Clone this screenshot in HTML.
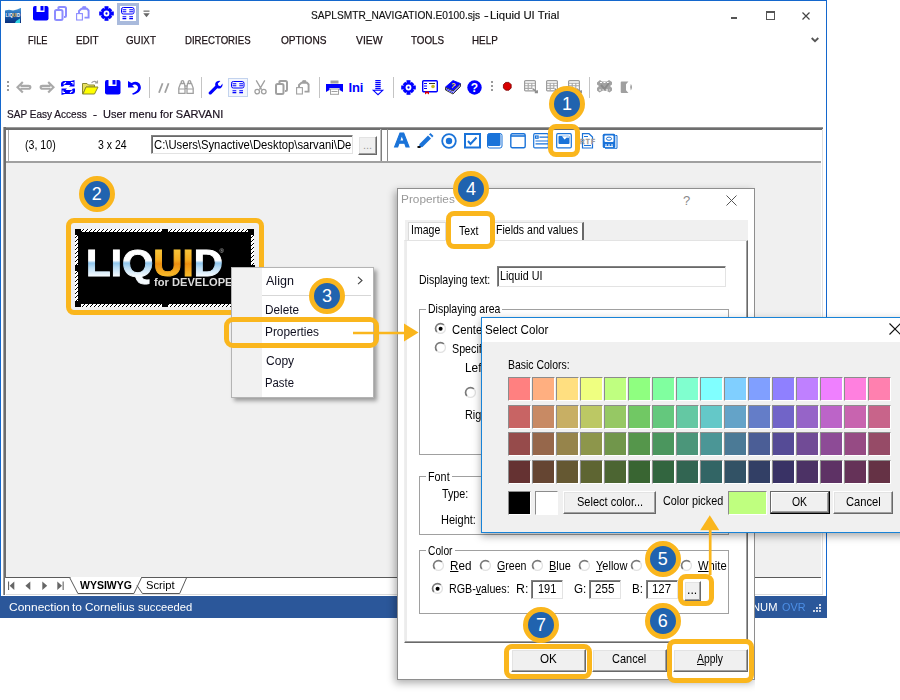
<!DOCTYPE html>
<html><head><meta charset="utf-8">
<style>
html,body{margin:0;padding:0;background:#fff;}
body{width:900px;height:700px;position:relative;overflow:hidden;font-family:"Liberation Sans",sans-serif;font-size:12px;color:#000;}
.a{position:absolute;}
.t{position:absolute;white-space:nowrap;line-height:1;transform-origin:0 0;}
#win{position:absolute;left:0;top:0;width:825px;height:616px;border:1px solid #1467cd;background:#fff;}
.m{font-size:12px;color:#3b2a2a;top:35px;}
.sep{position:absolute;width:1px;background:#c4c4c4;top:77px;height:21px;}
.or{position:absolute;border:5px solid #fab61d;border-radius:8px;box-sizing:border-box;}
.bg{position:absolute;width:25.8px;height:25.8px;border:5.1px solid #fab61d;border-radius:50%;background:#2063af;color:#fff;text-align:center;font-size:18px;line-height:26px;margin:-18px 0 0 -18px;}
.btn{position:absolute;box-sizing:border-box;background:#f0f0f0;border:1px solid;border-color:#fff #696969 #696969 #fff;box-shadow:inset -1px -1px 0 #a0a0a0, inset 1px 1px 0 #e3e3e3;}
.sk{position:absolute;box-sizing:border-box;background:#fff;border:1px solid;border-color:#828282 #e3e3e3 #e3e3e3 #828282;box-shadow:inset 1px 1px 0 #696969;}
.grp{position:absolute;box-sizing:border-box;border:1px solid #a0a0a0;box-shadow:1px 1px 0 #fff, inset 1px 1px 0 #fff;}
.rd{position:absolute;width:12px;height:12px;border-radius:50%;box-sizing:border-box;border:1px solid;border-color:#808080 #d8d8d8 #d8d8d8 #808080;background:#fff;transform:rotate(0deg);}
.rd.on::after{content:"";position:absolute;left:3px;top:3px;width:4px;height:4px;border-radius:50%;background:#000;}
.d{font-size:13px;color:#000;}
.sw{position:absolute;width:23px;height:24px;box-sizing:border-box;border:1px solid;border-color:#8c8c8c #fff #fff #8c8c8c;}
u{text-decoration:underline;text-underline-offset:1px;}
svg{position:absolute;overflow:visible;}
</style></head><body>
<div id="win"></div>
<svg style="left:5px;top:8px" width="16" height="15" viewBox="0 0 16 15"><defs><linearGradient id="ag" x1="0" y1="0" x2="0" y2="1"><stop offset="0" stop-color="#4a9ad8"/><stop offset="0.45" stop-color="#1c62b0"/><stop offset="1" stop-color="#082f7c"/></linearGradient></defs><path d="M0 2.5 L4 1.8 L8 2.4 L12 1.6 L15.5 0 L16 0 V15 H0Z" fill="url(#ag)"/><path d="M11 13 L15 10.5 V15 H10Z" fill="#35d6e6"/><text x="0.6" y="8.6" font-family="Liberation Sans,sans-serif" font-size="5.2" font-weight="bold" fill="#fff" textLength="14.5" lengthAdjust="spacingAndGlyphs">LIQ<tspan fill="#f5b21e">UI</tspan>D</text></svg>
<svg style="left:33px;top:6px" width="16" height="15" viewBox="0 0 16 15"><rect x="0" y="0" width="15.5" height="14.5" rx="2" fill="#0000ff"/><rect x="3.5" y="0" width="8" height="6" fill="#fff"/><rect x="7.5" y="0" width="3" height="4.5" fill="#0000ff"/></svg>
<svg style="left:54px;top:6px" width="14" height="15" viewBox="0 0 14 15" fill="none" stroke="#8c8cff" stroke-width="2"><path d="M4.5 3 V2.5 Q4 1 5.5 1 H10.5 Q12 1 12 2.5 V9.5 Q12 11 10.5 11 H10"/><rect x="1" y="4" width="7.5" height="10" rx="1.5"/></svg>
<svg style="left:76px;top:6px" width="14" height="15" viewBox="0 0 14 15" fill="none" stroke="#8c8cff"><path d="M6.300 2.400L6.800 0.600H9.700L10.200 2.400Z" fill="#8c8cff" stroke-width="0.800"/><path d="M3 7V5L5.500 2.800H11L12.600 4.500V11.600H8.500" stroke-width="1.900"/><rect x="0.600" y="7.600" width="5.800" height="6.400" stroke-width="1.100"/></svg>
<svg style="left:99px;top:6px" width="15" height="15" viewBox="-7.5 -7.5 15 15"><g fill="#0000ff"><circle r="4.9"/><rect x="-2" y="-7.3" width="4" height="14.6"/><rect x="-7.3" y="-2" width="14.6" height="4"/><rect x="-1.8" y="-6.4" width="3.6" height="12.8" transform="rotate(45)"/><rect x="-1.8" y="-6.4" width="3.6" height="12.8" transform="rotate(-45)"/></g><circle r="2.9" fill="#fff"/><circle r="1.15" fill="#0000ff"/></svg>
<div class="a" style="left:117px;top:3px;width:22px;height:22px;background:#a9badc;"></div>
<svg style="left:120px;top:6px" width="16" height="15" viewBox="0 0 16 15"><rect width="16" height="15" fill="#fff"/><g fill="none" stroke="#0000ff" stroke-width="1"><rect x="1.5" y="1.5" width="12.5" height="6.5" rx="1.8"/><path d="M2.5 3.7H6.3M9.3 3.7H13M2.5 5.7H6.3M9.3 5.7H13M2.5 10.8H6.3M9.3 10.8H13M2.5 12.6H6.3M9.3 12.6H13" stroke-width="1.1"/></g></svg>
<svg style="left:143px;top:10px" width="7" height="8" viewBox="0 0 7 8"><rect x="0.5" y="0.5" width="6" height="1.3" fill="#777"/><path d="M0.3 3.2H6.7L3.5 7.2Z" fill="#666"/></svg>
<div class="t " style="left:311.25px;top:10.03px;font-size:11.3px;transform:scaleX(0.9000);color:#111;-webkit-text-stroke:0.15px #111;">SAPLSMTR_NAVIGATION.E0100.sjs</div>
<div class="t " style="left:483.68px;top:10.03px;font-size:11.3px;transform:scaleX(1.2364);color:#111;-webkit-text-stroke:0.15px #111;">-</div>
<div class="t " style="left:490.25px;top:10.03px;font-size:11.3px;transform:scaleX(1.0037);color:#111;-webkit-text-stroke:0.15px #111;">Liquid UI Trial</div>
<div class="a" style="left:731px;top:17px;width:6px;height:2px;background:#555;"></div>
<div class="a" style="left:766px;top:11px;width:8px;height:8px;border:1px solid #555;border-top-width:2px;box-sizing:content-box;width:7px;height:6px;"></div>
<svg style="left:802px;top:12px" width="8" height="8" viewBox="0 0 8 8"><path d="M0.5 0.5L7.5 7.5M7.5 0.5L0.5 7.5" stroke="#444" stroke-width="1.2"/></svg>
<svg style="left:811px;top:37px" width="8" height="6" viewBox="0 0 8 6"><path d="M0.7 1L4 4.2L7.3 1" stroke="#555" stroke-width="1.8" fill="none"/></svg>
<div class="t " style="left:28.29px;top:34.93px;font-size:11.3px;transform:scaleX(0.8132);color:#1c1216;-webkit-text-stroke:0.25px #1c1216;">FILE</div>
<div class="t " style="left:75.94px;top:34.93px;font-size:11.3px;transform:scaleX(0.8768);color:#1c1216;-webkit-text-stroke:0.25px #1c1216;">EDIT</div>
<div class="t " style="left:126.17px;top:34.93px;font-size:11.3px;transform:scaleX(0.8647);color:#1c1216;-webkit-text-stroke:0.25px #1c1216;">GUIXT</div>
<div class="t " style="left:185.16px;top:34.93px;font-size:11.3px;transform:scaleX(0.8515);color:#1c1216;-webkit-text-stroke:0.25px #1c1216;">DIRECTORIES</div>
<div class="t " style="left:281.25px;top:34.93px;font-size:11.3px;transform:scaleX(0.8960);color:#1c1216;-webkit-text-stroke:0.25px #1c1216;">OPTIONS</div>
<div class="t " style="left:356.20px;top:34.93px;font-size:11.3px;transform:scaleX(0.9172);color:#1c1216;-webkit-text-stroke:0.25px #1c1216;">VIEW</div>
<div class="t " style="left:410.98px;top:34.93px;font-size:11.3px;transform:scaleX(0.8693);color:#1c1216;-webkit-text-stroke:0.25px #1c1216;">TOOLS</div>
<div class="t " style="left:472.35px;top:34.93px;font-size:11.3px;transform:scaleX(0.8708);color:#1c1216;-webkit-text-stroke:0.25px #1c1216;">HELP</div>
<svg style="left:7px;top:81px" width="2" height="11" viewBox="0 0 2 11" fill="#9a9a9a"><rect y="0" width="2" height="2"/><rect y="4" width="2" height="2"/><rect y="8" width="2" height="2"/></svg>
<svg style="left:16px;top:81px" width="16" height="13" viewBox="0 0 16 13" fill="none" stroke="#a9a9a9" stroke-width="2.1"><path d="M6.8 1L1.5 6.3L6.8 11.6M4.5 4.9H12.6Q14.4 4.9 14.4 6.3T12.6 7.7H4.5"/></svg>
<svg style="left:39px;top:81px" width="16" height="13" viewBox="0 0 16 13" fill="none" stroke="#a9a9a9" stroke-width="2.1"><path d="M9.2 1L14.5 6.3L9.2 11.6M11.5 4.9H3.4Q1.6 4.9 1.6 6.3T3.4 7.7H11.5"/></svg>
<svg style="left:60px;top:80px" width="16" height="15" viewBox="0 0 16 15"><g fill="#0000ff"><path d="M1 6.5V3.5Q1 1.5 3.5 1H11L14.5 0V6.5H9L10.5 5H4.5L3 6.5Z"/><path d="M15 8.5V11.5Q15 13.5 12.500 14H5L1.5 15V8.5H7L5.500 10H11.5L13 8.5Z"/></g><g stroke="#fff" stroke-width="1.1" fill="none"><path d="M3.500 4.300L6 2.300M11 2.500H13V4.500"/><path d="M12.500 10.700L10 12.700M5 12.500H3V10.500"/></g></svg>
<svg style="left:82px;top:80px" width="17" height="15" viewBox="0 0 17 15"><path d="M0.5 3.5H5L6.5 5H12.5V7H4L1 14H0.5Z" fill="#e8e060" stroke="#8a8a30" stroke-width="1"/><path d="M4 7H16L12.5 14H1Z" fill="#ffff00" stroke="#8a8a30" stroke-width="1"/><path d="M9.5 3Q12 0 15 2.5M15.5 0.5V3H13" fill="none" stroke="#a0a0a0" stroke-width="1.1"/></svg>
<svg style="left:105px;top:80px" width="16" height="15" viewBox="0 0 16 15"><rect x="0" y="0" width="15.5" height="14.5" rx="2" fill="#0000ff"/><rect x="3.5" y="0" width="8" height="6" fill="#fff"/><rect x="7.5" y="0" width="3" height="4.5" fill="#0000ff"/></svg>
<svg style="left:127px;top:80px" width="15" height="15" viewBox="0 0 15 15"><path d="M1 1V7.5H7.5L5.3 5.3Q8 3.8 10 5.5T10 10.5Q8 12.5 5 13.8L6 14.8Q11 13.5 13 10.5T12.5 3.5Q9.5 0.5 4.5 3Z" fill="#0000ff"/></svg>
<div class="sep" style="left:149px"></div>
<svg style="left:158px;top:83px" width="12" height="10" viewBox="0 0 12 10" stroke="#a0a0a0" stroke-width="1.8"><path d="M4.6 0.3L1 9.7M10.6 0.3L7 9.7"/></svg>
<svg style="left:178px;top:80px" width="16" height="15" viewBox="0 0 16 15" fill="none" stroke="#a0a0a0" stroke-width="1.3"><path d="M3.3 3.2V1.800Q3.3 0.700 4.5 0.700T5.700 1.800V3.200M10.3 3.200V1.800Q10.300 0.700 11.500 0.700T12.700 1.800V3.200"/><path d="M2.500 3.500H6.500L7 8V13.300H0.800V8ZM9.500 3.500H13.500L15.200 8V13.300H9V8ZM7 6H9M7 8.500H9" /><path d="M0.800 9H7M9 9H15.200" stroke-width="1"/></svg>
<div class="sep" style="left:201px"></div>
<svg style="left:208px;top:80px" width="15" height="15" viewBox="0 0 15 15"><path d="M0.8 12.2L7.3 5.7Q6.6 2.6 9.2 1.2Q10.8 0.4 12.4 1L9.8 3.6L10.4 5.6L12.4 6.2L14.6 3.6Q15 6.4 13 7.9Q11.3 9 9.3 8.2L3 14.4Q1.8 14.8 1 14Q0.2 13.2 0.8 12.2Z" fill="#0000ff"/></svg>
<div class="a" style="left:228px;top:78px;width:20px;height:19px;box-sizing:border-box;border:1.5px solid #c3d3ee;background:#f3f6fc;"></div>
<svg style="left:230px;top:80px" width="16" height="15" viewBox="0 0 16 15"><rect width="16" height="15" fill="none"/><g fill="none" stroke="#0000ff" stroke-width="1"><rect x="1.5" y="1.5" width="12.5" height="6.5" rx="1.8"/><path d="M2.5 3.7H6.3M9.3 3.7H13M2.5 5.7H6.3M9.3 5.7H13M2.5 10.8H6.3M9.3 10.8H13M2.5 12.6H6.3M9.3 12.6H13" stroke-width="1.1"/></g></svg>
<svg style="left:254px;top:80px" width="13" height="15" viewBox="0 0 13 15" fill="none" stroke="#a0a0a0" stroke-width="1.3"><path d="M2.2 0.3L7.6 9.6M10.8 0.3L5.4 9.6"/><circle cx="3.2" cy="11.6" r="2.3"/><circle cx="9.8" cy="11.6" r="2.3"/></svg>
<svg style="left:275px;top:80px" width="14" height="15" viewBox="0 0 14 15" fill="none" stroke="#a0a0a0" stroke-width="2"><path d="M4.5 3 V2.5 Q4 1 5.5 1 H10.5 Q12 1 12 2.5 V9.5 Q12 11 10.5 11 H10"/><rect x="1" y="4" width="7.5" height="10" rx="1.5"/></svg>
<svg style="left:296px;top:80px" width="14" height="15" viewBox="0 0 14 15" fill="none" stroke="#a0a0a0"><path d="M6.300 2.400L6.800 0.600H9.700L10.200 2.400Z" fill="#a0a0a0" stroke-width="0.800"/><path d="M3 7V5L5.500 2.800H11L12.600 4.500V11.600H8.500" stroke-width="1.900"/><rect x="0.600" y="7.600" width="5.800" height="6.400" stroke-width="1.100"/></svg>
<div class="sep" style="left:319px"></div>
<svg style="left:326px;top:80px" width="17" height="15" viewBox="0 0 17 15"><rect x="4.5" y="0.5" width="8" height="3" fill="#a0a0a0"/><path d="M0 4H17V12L13.5 10V8H3.5V10L0 12Z" fill="#0000ff"/><rect x="4.5" y="9" width="8" height="5.3" fill="#fff" stroke="#a0a0a0" stroke-width="1"/><path d="M5.5 11.5H11.5" stroke="#a0a0a0" stroke-width="1"/></svg>
<div class="t" style="left:348.5px;top:81px;font-size:13px;font-weight:bold;color:#0000ff;letter-spacing:-0.2px;">Ini</div>
<svg style="left:372px;top:80px" width="12" height="16" viewBox="0 0 12 16" fill="none" stroke="#0000ff" stroke-width="1.1"><path d="M3.300 0.600H8.700M3.300 2.600H8.700M3.300 4.600H8.700M3.300 6.600H8.700M3.300 8.600H8.700"/><path d="M1.300 10.300H10.700L6 14.700Z"/></svg>
<div class="sep" style="left:393px"></div>
<svg style="left:401px;top:80px" width="15" height="15" viewBox="-7.5 -7.5 15 15"><g fill="#0000ff"><circle r="4.9"/><rect x="-2" y="-7.3" width="4" height="14.6"/><rect x="-7.3" y="-2" width="14.6" height="4"/><rect x="-1.8" y="-6.4" width="3.6" height="12.8" transform="rotate(45)"/><rect x="-1.8" y="-6.4" width="3.6" height="12.8" transform="rotate(-45)"/></g><circle r="2.9" fill="#fff"/><circle r="1.15" fill="#0000ff"/></svg>
<svg style="left:422px;top:80px" width="16" height="15" viewBox="0 0 16 15"><rect x="0.7" y="0.7" width="14.6" height="11" rx="1" fill="#fff" stroke="#0000ff" stroke-width="1.4"/><path d="M2 3.5H5M2 6H5M2 8.5H5" stroke="#0000ff" stroke-width="1.2"/><path d="M7 3.5H13" stroke="#333" stroke-width="1"/><circle cx="11" cy="6.5" r="1.8" fill="#c8b820"/><path d="M3 11.5H7V14.5L5 13L3 14.5Z" fill="#d00" /></svg>
<svg style="left:445px;top:80px" width="16" height="15" viewBox="0 0 16 15"><path d="M0.5 7L8 0.5L15.500 3.500L8 10.500Z" fill="#0000ff" stroke="#0000ff" stroke-width="0.800"/><path d="M0.500 7.500V10L8 14L15.500 6.500V4L8 11Z" fill="#fff" stroke="#222" stroke-width="0.900"/><path d="M1 9L8 12.600L15 5.600" stroke="#0000ff" stroke-width="0.900" fill="none"/><text x="5.800" y="8.300" font-size="7.500" font-weight="bold" fill="#ffe14a" font-family="Liberation Sans,sans-serif" transform="rotate(18 8 6)">?</text></svg>
<svg style="left:467px;top:80px" width="15" height="15" viewBox="0 0 15 15"><circle cx="7.5" cy="7.5" r="7.2" fill="#0000ff"/><text x="7.5" y="12" text-anchor="middle" font-size="12" font-weight="bold" fill="#fff" font-family="Liberation Sans,sans-serif">?</text></svg>
<svg style="left:491.3px;top:81px" width="2" height="11" viewBox="0 0 2 11" fill="#9a9a9a"><rect y="0" width="2" height="2"/><rect y="4" width="2" height="2"/><rect y="8" width="2" height="2"/></svg>
<svg style="left:503.3px;top:82.2px" width="9" height="9" viewBox="0 0 11 11"><path d="M3.2 0.5H7.3L10 3.200V7.300L7.300 10H3.200L0.5 7.300V3.200Z" fill="#d80000" stroke="#7a0000" stroke-width="1"/></svg>
<svg style="left:523.5px;top:80.3px" width="14" height="13" viewBox="0 0 14 13" fill="none" stroke="#9c9c9c" stroke-width="1.2"><rect x="0.6" y="0.6" width="10.8" height="10.3" rx="1"/><path d="M1 3.200H11M1 5.800H11M1 8.400H8M4.200 3.200V10.500M7.800 3.200V8.500" stroke="#a8a8a8" stroke-width="1.100"/><path d="M8.500 8.500L13 12.300M10.800 12.400H13.200V10.200" stroke="#8c8c8c" stroke-width="1.500"/></svg>
<svg style="left:545.5px;top:80.3px" width="14" height="13" viewBox="0 0 14 13" fill="none" stroke="#9c9c9c" stroke-width="1.2"><rect x="0.6" y="0.6" width="10.8" height="10.3" rx="1"/><path d="M1 3.200H11M1 5.800H11M1 8.400H8M4.200 3.200V10.500M7.800 3.200V8.500" stroke="#a8a8a8" stroke-width="1.100"/><path d="M8.500 8.500L13 12.300M10.800 12.400H13.200V10.200" stroke="#8c8c8c" stroke-width="1.500"/></svg>
<svg style="left:567.5px;top:80.3px" width="14" height="13" viewBox="0 0 14 13" fill="none" stroke="#9c9c9c" stroke-width="1.2"><rect x="0.6" y="0.6" width="10.8" height="10.3" rx="1"/><path d="M1 3.200H11M1 5.800H11M1 8.400H8M4.200 3.200V10.500M7.800 3.200V8.500" stroke="#a8a8a8" stroke-width="1.100"/><path d="M8.500 8.500L13 12.300M10.800 12.400H13.200V10.200" stroke="#8c8c8c" stroke-width="1.500"/></svg>
<div class="sep" style="left:589px"></div>
<svg style="left:597px;top:80px" width="15" height="12.500" viewBox="0 0 15 12.5"><g fill="#a2a2a2"><path d="M0 2.500L3 0L5 1.500H10L12 0L15 2V4.500L13 6L15 8V10.500L12.500 12.500L10 11H5L2.500 12.500L0 10.500V8L2 6L0 4.500Z"/></g><path d="M3 2.500H12M2 10H13" stroke="#fff" stroke-width="1" stroke-dasharray="2 1.500"/><path d="M4 5L7.500 9L12 3" stroke="#8a8a8a" stroke-width="2" fill="none"/></svg>
<svg style="left:620px;top:80.500px" width="13" height="12.500" viewBox="0 0 13 13"><path d="M0.500 1.500Q0.500 0.500 1.500 0.500H8.500L6 3.500V9.500L8.500 12.500H1.500Q0.500 12.500 0.500 11.500Z" fill="#a0a0a0"/><path d="M11 3.200Q13.500 6.500 11 9.800Q9.500 6.500 11 3.200Z" fill="#a0a0a0"/></svg>
<div class="t " style="left:7.05px;top:108.83px;font-size:11.3px;transform:scaleX(0.8901);color:#1c1220;-webkit-text-stroke:0.2px #1c1220;">SAP Easy Access</div>
<div class="t " style="left:93.47px;top:108.83px;font-size:11.3px;transform:scaleX(1.0667);color:#1c1220;-webkit-text-stroke:0.2px #1c1220;">-</div>
<div class="t " style="left:102.77px;top:108.83px;font-size:11.3px;transform:scaleX(0.9753);color:#1c1220;-webkit-text-stroke:0.2px #1c1220;">User menu for SARVANI</div>
<div class="a" style="left:4px;top:127px;width:822px;height:469px;background:#fff;"></div>
<div class="a" style="left:3px;top:127px;width:820px;height:2.700px;background:linear-gradient(#9a9a9a 0 1px,#6e6e6e 1px);"></div>
<div class="a" style="left:3px;top:127px;width:3px;height:451px;background:linear-gradient(90deg,#a4a4a4 0 1.200px,#6e6e6e 1.200px);"></div><div class="a" style="left:3px;top:578px;width:2px;height:16.500px;background:linear-gradient(90deg,#9a9a9a 0 0.800px,#6e6e6e 0.800px);"></div>
<div class="a" style="left:8px;top:130px;width:1px;height:31px;background:#ababab;"></div>
<div class="a" style="left:6px;top:163px;width:815px;height:414px;background:#f0f0f0;"></div>
<div class="a" style="left:6px;top:161px;width:815px;height:2px;background:#a0a0a0;"></div>
<div class="a" style="left:6px;top:577px;width:815px;height:1px;background:#5a5a5a;"></div>
<div class="a" style="left:822px;top:129px;width:1px;height:466px;background:#e0e0e0;"></div>
<div class="a" style="left:6px;top:594px;width:817px;height:1px;background:#dcdcdc;"></div>
<div class="t " style="left:25.06px;top:138.82px;font-size:12.5px;transform:scaleX(0.8493);">(3, 10)</div>
<div class="t " style="left:98.28px;top:138.82px;font-size:12.5px;transform:scaleX(0.8421);">3 x 24</div>
<div class="sk" style="left:151px;top:135px;width:202px;height:19px;"></div>
<div class="t " style="left:154.02px;top:138.82px;font-size:12.5px;transform:scaleX(0.9016);">C:\Users\Synactive\Desktop\sarvani\De</div>
<div class="btn" style="left:358px;top:136px;width:19px;height:19px;"></div><div class="t" style="left:363px;top:140px;font-size:11px;color:#9a9a9a;">...</div>
<div class="a" style="left:380px;top:129px;width:1px;height:32px;background:#c0c0c0;"></div>
<div class="a" style="left:381px;top:129px;width:1px;height:32px;background:#7f7f7f;"></div>
<div class="a" style="left:387px;top:129px;width:1px;height:32px;background:#8a8a8a;"></div>
<div class="t" style="left:394px;top:130px;font-size:20.5px;font-weight:bold;color:#1a73d9;-webkit-text-stroke:1px #1a73d9;transform:scaleX(1.06);">A</div>
<svg style="left:417px;top:132px" width="17" height="16" viewBox="0 0 17 16"><path d="M2.5 12L11 3.5L14 6.5L5.5 15L2 15.5Z" fill="#1a73d9"/><path d="M12 2.5L13.5 1L16.5 4L15 5.5Z" fill="#1a73d9"/><path d="M12.3 3L14.6 5.3" stroke="#fff" stroke-width="0.8"/><rect x="0.5" y="14" width="3" height="2" fill="#111"/></svg>
<svg style="left:441px;top:133px" width="16" height="16" viewBox="0 0 16 16"><circle cx="8" cy="8" r="6.8" fill="#fff" stroke="#1a73d9" stroke-width="1.8"/><circle cx="8" cy="8" r="3.2" fill="#1a73d9"/></svg>
<svg style="left:464px;top:133px" width="17" height="16" viewBox="0 0 17 16"><rect x="1" y="1" width="15" height="13.5" fill="#fff" stroke="#1a73d9" stroke-width="2"/><path d="M4 8L6.5 11L12.5 4.5" stroke="#1a73d9" stroke-width="2" fill="none"/></svg>
<svg style="left:487px;top:133px" width="16" height="16" viewBox="0 0 16 16"><rect x="0.5" y="0.5" width="14.5" height="14.5" rx="2" fill="#fff" stroke="#1a73d9" stroke-width="1"/><rect x="0.5" y="0.5" width="13" height="12.5" rx="1.5" fill="#1a73d9"/></svg>
<svg style="left:510px;top:133px" width="16" height="16" viewBox="0 0 16 16"><rect x="0.8" y="0.8" width="14.4" height="14" rx="1.5" fill="#fff" stroke="#1a73d9" stroke-width="1.4"/><path d="M1 3H15" stroke="#1a73d9" stroke-width="1.6"/></svg>
<svg style="left:533px;top:133px" width="16" height="16" viewBox="0 0 16 16" fill="none" stroke="#1a73d9" stroke-width="1.2"><rect x="0.7" y="0.7" width="14.6" height="14.2" rx="1.2" fill="#fff"/><rect x="2.5" y="3" width="2.6" height="2.2"/><path d="M6.5 4.2H15M2.5 8H15M2.5 10.8H15"/></svg>
<svg style="left:556px;top:133px" width="16" height="16" viewBox="0 0 16 16"><rect x="0.7" y="0.7" width="14.6" height="14.2" rx="1.2" fill="#fff" stroke="#1a73d9" stroke-width="1.2"/><rect x="2.5" y="2.8" width="11" height="8.2" rx="1" fill="#1a73d9"/><path d="M3 3.2L6 3.2L8.5 6.5L12 3.5L13 4.5V3.2Z" fill="#fff"/><circle cx="12" cy="4.3" r="0.8" fill="#fff"/></svg>
<svg style="left:580px;top:133px" width="15" height="16" viewBox="0 0 15 16"><path d="M2.5 0.7H9L12.5 4V15H2.5Z" fill="#fff" stroke="#1a73d9" stroke-width="1.2"/><path d="M4 3.5H8M4 12.5H11" stroke="#1a73d9" stroke-width="1"/><text x="0" y="10.6" font-size="6.5" font-weight="bold" fill="#9a9a9a" stroke="#9a9a9a" stroke-width="0.3" font-family="Liberation Sans,sans-serif" textLength="15">RTF</text></svg>
<svg style="left:602px;top:133px" width="16" height="16" viewBox="0 0 16 16"><rect x="0.7" y="0.7" width="12.6" height="14.4" rx="1.5" fill="#1a73d9"/><path d="M13.5 2.5H15V15.3H3" stroke="#1a73d9" stroke-width="1" fill="none"/><rect x="2.5" y="2.5" width="9" height="6.5" rx="1" fill="#fff"/><ellipse cx="7" cy="5.7" rx="2.6" ry="1.6" fill="none" stroke="#1a73d9" stroke-width="1"/><path d="M3 12H5M6 12H8M9 12H11M3 13.6H11" stroke="#fff" stroke-width="1"/></svg>
<svg style="left:6px;top:577px" width="200" height="18" viewBox="0 0 200 18"><g fill="#666"><rect x="2" y="4.5" width="1.1" height="8.5"/><path d="M8.3 4.5V13L3.6 8.750Z"/><path d="M24.300 4.500V13L19.400 8.750Z"/><path d="M36.300 4.500V13L41.200 8.750Z"/><path d="M51.300 4.500V13L56 8.750Z"/><rect x="56.600" y="4.500" width="1.100" height="8.500"/></g><path d="M63.6 0.5L71.9 16.5H127.9L135.6 0.5" fill="#fff" stroke="#5a5a5a" stroke-width="1"/><path d="M131 8.500L136.4 16.500H173.700L180.700 0.500" fill="none" stroke="#5a5a5a" stroke-width="1"/><rect x="65" y="0" width="70" height="1" fill="#fff"/></svg>
<div class="t " style="left:79.50px;top:580.19px;font-size:11px;transform:scaleX(0.9544);font-weight:bold;">WYSIWYG</div>
<div class="t " style="left:145.51px;top:579.77px;font-size:11.5px;transform:scaleX(0.9739);">Script</div>
<div class="a" style="left:0;top:596px;width:827px;height:22px;background:#2b579a;"></div>
<div class="t " style="left:9.27px;top:601.63px;font-size:11.3px;transform:scaleX(1.0607);color:#fff;">Connection</div>
<div class="t " style="left:72.33px;top:601.63px;font-size:11.3px;transform:scaleX(1.0629);color:#fff;">to</div>
<div class="t " style="left:85.48px;top:601.63px;font-size:11.3px;transform:scaleX(1.0374);color:#fff;">Cornelius</div>
<div class="t " style="left:138.40px;top:601.63px;font-size:11.3px;transform:scaleX(0.9925);color:#fff;">succeeded</div>
<div class="t " style="left:751.51px;top:601.83px;font-size:11.3px;transform:scaleX(0.9895);color:#fff;">NUM</div>
<div class="t " style="left:781.82px;top:601.83px;font-size:11.3px;transform:scaleX(0.9617);color:#4d8fe6;">OVR</div>
<svg style="left:813px;top:604px" width="9" height="9" viewBox="0 0 9 9" fill="#d0d8e8"><rect x="6" y="0" width="2" height="2"/><rect x="3" y="3" width="2" height="2"/><rect x="6" y="3" width="2" height="2"/><rect x="0" y="6" width="2" height="2"/><rect x="3" y="6" width="2" height="2"/><rect x="6" y="6" width="2" height="2"/></svg>
<div class="a" style="left:75px;top:228.5px;width:179px;height:78.5px;background:repeating-linear-gradient(135deg,#000 0 1.1px,#fff 1.1px 2.83px);"></div>
<div class="a" style="left:78px;top:232px;width:173px;height:72px;background:#000;"></div>
<div class="a" style="left:75px;top:228.5px;width:6px;height:6px;background:#000;"></div>
<div class="a" style="left:161.5px;top:228.5px;width:6px;height:6px;background:#000;"></div>
<div class="a" style="left:248px;top:228.5px;width:6px;height:6px;background:#000;"></div>
<div class="a" style="left:75px;top:265px;width:6px;height:6px;background:#000;"></div>
<div class="a" style="left:249px;top:265px;width:6px;height:6px;background:#000;"></div>
<div class="a" style="left:75px;top:301px;width:6px;height:6px;background:#000;"></div>
<div class="a" style="left:161.5px;top:301px;width:6px;height:6px;background:#000;"></div>
<div class="a" style="left:248px;top:301px;width:6px;height:6px;background:#000;"></div>
<svg style="left:78px;top:232px" width="173" height="72" viewBox="0 0 173 72"><defs><linearGradient id="lg" gradientUnits="userSpaceOnUse" x1="0" y1="17" x2="0" y2="44"><stop offset="0" stop-color="#fff"/><stop offset="0.42" stop-color="#fff"/><stop offset="0.52" stop-color="#8fc6ee"/><stop offset="0.68" stop-color="#b9dcf4"/><stop offset="1" stop-color="#f4fafe"/></linearGradient><linearGradient id="og" gradientUnits="userSpaceOnUse" x1="0" y1="17" x2="0" y2="44"><stop offset="0" stop-color="#f8c63a"/><stop offset="0.4" stop-color="#f6ae22"/><stop offset="0.55" stop-color="#ee8f10"/><stop offset="1" stop-color="#f9bc2a"/></linearGradient><filter id="bl"><feGaussianBlur stdDeviation="0.5"/></filter></defs><g filter="url(#bl)"><text x="8" y="43.6" font-family="Liberation Sans,sans-serif" font-weight="bold" font-size="37.3" fill="url(#lg)" stroke="url(#lg)" stroke-width="0.9" textLength="137" lengthAdjust="spacingAndGlyphs">LIQ<tspan fill="url(#og)" stroke="url(#og)">UI</tspan>D</text><text x="76" y="54.1" font-family="Liberation Sans,sans-serif" font-weight="bold" font-size="10.6" fill="#dcdcdc" textLength="94" lengthAdjust="spacingAndGlyphs">for DEVELOPERS</text><text x="141.5" y="20.5" font-family="Liberation Sans,sans-serif" font-size="6" fill="#ccc">®</text></g></svg>
<div class="or" style="left:66.3px;top:217.7px;width:197.7px;height:97.3px;"></div>
<div class="bg" style="left:96.9px;top:193.9px;">2</div>
<div class="a" style="left:231px;top:267px;width:143px;height:131px;box-sizing:border-box;background:#fff;border:1px solid #b4b4b4;box-shadow:3px 3px 4px rgba(0,0,0,.35);"></div>
<div class="a" style="left:232px;top:268px;width:30px;height:129px;background:#f1f1f1;"></div>
<div class="a" style="left:262px;top:295px;width:109px;height:1px;background:#d7d7d7;"></div>
<div class="a" style="left:262px;top:346px;width:109px;height:1px;background:#d7d7d7;"></div>
<div class="t " style="left:266.40px;top:274.84px;font-size:12px;transform:scaleX(1.0462);color:#101020;">Align</div>
<div class="t " style="left:265.42px;top:304.04px;font-size:12px;transform:scaleX(0.9805);color:#101020;">Delete</div>
<div class="t " style="left:265.41px;top:326.04px;font-size:12px;transform:scaleX(0.9878);color:#101020;">Properties</div>
<div class="t " style="left:265.90px;top:355.04px;font-size:12px;transform:scaleX(1.0036);color:#101020;">Copy</div>
<div class="t " style="left:265.46px;top:376.84px;font-size:12px;transform:scaleX(0.9436);color:#101020;">Paste</div>
<svg style="left:357px;top:276px" width="6" height="9" viewBox="0 0 6 9"><path d="M1 0.8L5 4.5L1 8.2" stroke="#444" stroke-width="1.1" fill="none"/></svg>
<div class="a" style="left:397px;top:187.5px;width:358px;height:492px;box-sizing:border-box;background:#fff;border:1px solid #8e8e8e;box-shadow:-2px 3px 8px rgba(0,0,0,.33);clip-path:inset(-20px 0 -20px -20px);"></div>
<div class="t " style="left:400.50px;top:194.41px;font-size:11.8px;transform:scaleX(1.0010);color:#999;">Properties</div>
<div class="t " style="left:683.00px;top:193.90px;font-size:13px;transform:scaleX(1.0000);color:#8a8a8a;">?</div>
<svg style="left:725.5px;top:194.5px" width="11" height="11" viewBox="0 0 11 11"><path d="M0.5 0.5L10.5 10.5M10.5 0.5L0.5 10.5" stroke="#555" stroke-width="1"/></svg>
<div class="a" style="left:405px;top:220px;width:343px;height:21px;background:#f0f0f0;"></div>
<div class="a" style="left:404px;top:240px;width:344px;height:403px;box-sizing:border-box;background:#fff;border:1px solid;border-color:#e3e3e3 #696969 #696969 #efefef;box-shadow:inset -1px -1px 0 #a0a0a0, inset 2px 0 0 #ececec;"></div>
<div class="a" style="left:408px;top:222px;width:38px;height:18px;background:#fff;border:1px solid #dadada;border-bottom:none;box-sizing:border-box;"></div>
<div class="a" style="left:446px;top:220px;width:46px;height:22px;background:#fff;"></div>
<div class="a" style="left:492px;top:222px;width:92px;height:18px;background:#fff;border:1px solid #dadada;border-bottom:none;border-right:2px solid #696969;box-sizing:border-box;"></div>
<div class="t " style="left:411.25px;top:224.43px;font-size:12.6px;transform:scaleX(0.8361);">Image</div>
<div class="t " style="left:458.59px;top:225.33px;font-size:12.6px;transform:scaleX(0.8396);">Text</div>
<div class="t " style="left:495.66px;top:224.43px;font-size:12.6px;transform:scaleX(0.8363);">Fields and values</div>
<div class="t " style="left:419.07px;top:274.23px;font-size:12.6px;transform:scaleX(0.8348);">Displaying text:</div>
<div class="sk" style="left:497px;top:266px;width:229px;height:21px;"></div>
<div class="t " style="left:499.65px;top:269.83px;font-size:12.6px;transform:scaleX(0.8526);">Liquid UI</div>
<div class="grp" style="left:419px;top:309px;width:310px;height:146px;"></div>
<div class="a" style="left:426px;top:305px;width:76px;height:10px;background:#fff;"></div>
<div class="t " style="left:427.77px;top:302.93px;font-size:12.6px;transform:scaleX(0.8338);">Displaying area</div>
<svg style="left:434.7px;top:323.4px" width="11" height="11" viewBox="0 0 11 11"><circle cx="5.5" cy="5.5" r="4.6" fill="#fff"/><path d="M2 9A4.9 4.9 0 0 1 9 2" stroke="#7a7a7a" stroke-width="1.7" fill="none"/><path d="M9 2A4.9 4.9 0 0 1 2 9" stroke="#e2e2e2" stroke-width="1.3" fill="none"/><circle cx="5.6" cy="5.7" r="2" fill="#000"/></svg>
<div class="t " style="left:451.82px;top:323.63px;font-size:12.6px;transform:scaleX(0.9000);">Centered</div>
<svg style="left:434.7px;top:342.2px" width="11" height="11" viewBox="0 0 11 11"><circle cx="5.5" cy="5.5" r="4.6" fill="#fff"/><path d="M2 9A4.9 4.9 0 0 1 9 2" stroke="#7a7a7a" stroke-width="1.7" fill="none"/><path d="M9 2A4.9 4.9 0 0 1 2 9" stroke="#e2e2e2" stroke-width="1.3" fill="none"/></svg>
<div class="t " style="left:451.86px;top:342.53px;font-size:12.6px;transform:scaleX(0.8500);">Specific</div>
<div class="t " style="left:464.66px;top:361.73px;font-size:12.6px;transform:scaleX(0.9400);">Left</div>
<svg style="left:465.2px;top:386.8px" width="11" height="11" viewBox="0 0 11 11"><circle cx="5.5" cy="5.5" r="4.6" fill="#fff"/><path d="M2 9A4.9 4.9 0 0 1 9 2" stroke="#7a7a7a" stroke-width="1.7" fill="none"/><path d="M9 2A4.9 4.9 0 0 1 2 9" stroke="#e2e2e2" stroke-width="1.3" fill="none"/></svg>
<div class="t " style="left:464.74px;top:408.53px;font-size:12.6px;transform:scaleX(0.8600);">Right</div>
<div class="grp" style="left:419px;top:476px;width:310px;height:59px;"></div>
<div class="a" style="left:426px;top:472px;width:26px;height:10px;background:#fff;"></div>
<div class="t " style="left:427.84px;top:471.13px;font-size:12.6px;transform:scaleX(0.8583);">Font</div>
<div class="t " style="left:441.79px;top:487.63px;font-size:12.6px;transform:scaleX(0.8508);">Type:</div>
<div class="t " style="left:441.13px;top:514.13px;font-size:12.6px;transform:scaleX(0.8742);">Height:</div>
<div class="grp" style="left:419px;top:550px;width:310px;height:64px;"></div>
<div class="a" style="left:426px;top:546px;width:29px;height:10px;background:#fff;"></div>
<div class="t " style="left:428.09px;top:544.93px;font-size:12.6px;transform:scaleX(0.8138);">Color</div>
<svg style="left:433px;top:560.1px" width="11" height="11" viewBox="0 0 11 11"><circle cx="5.5" cy="5.5" r="4.6" fill="#fff"/><path d="M2 9A4.9 4.9 0 0 1 9 2" stroke="#7a7a7a" stroke-width="1.7" fill="none"/><path d="M9 2A4.9 4.9 0 0 1 2 9" stroke="#e2e2e2" stroke-width="1.3" fill="none"/></svg>
<div class="t " style="left:450.00px;top:559.63px;font-size:12.6px;transform:scaleX(0.9258);"><u>R</u>ed</div>
<svg style="left:480px;top:560.1px" width="11" height="11" viewBox="0 0 11 11"><circle cx="5.5" cy="5.5" r="4.6" fill="#fff"/><path d="M2 9A4.9 4.9 0 0 1 9 2" stroke="#7a7a7a" stroke-width="1.7" fill="none"/><path d="M9 2A4.9 4.9 0 0 1 2 9" stroke="#e2e2e2" stroke-width="1.3" fill="none"/></svg>
<div class="t " style="left:497.30px;top:559.63px;font-size:12.6px;transform:scaleX(0.8409);"><u>G</u>reen</div>
<svg style="left:532px;top:560.1px" width="11" height="11" viewBox="0 0 11 11"><circle cx="5.5" cy="5.5" r="4.6" fill="#fff"/><path d="M2 9A4.9 4.9 0 0 1 9 2" stroke="#7a7a7a" stroke-width="1.7" fill="none"/><path d="M9 2A4.9 4.9 0 0 1 2 9" stroke="#e2e2e2" stroke-width="1.3" fill="none"/></svg>
<div class="t " style="left:549.00px;top:559.63px;font-size:12.6px;transform:scaleX(0.8694);"><u>B</u>lue</div>
<svg style="left:579px;top:560.1px" width="11" height="11" viewBox="0 0 11 11"><circle cx="5.5" cy="5.5" r="4.6" fill="#fff"/><path d="M2 9A4.9 4.9 0 0 1 9 2" stroke="#7a7a7a" stroke-width="1.7" fill="none"/><path d="M9 2A4.9 4.9 0 0 1 2 9" stroke="#e2e2e2" stroke-width="1.3" fill="none"/></svg>
<div class="t " style="left:595.50px;top:559.63px;font-size:12.6px;transform:scaleX(0.8750);"><u>Y</u>ellow</div>
<svg style="left:631.3px;top:560.1px" width="11" height="11" viewBox="0 0 11 11"><circle cx="5.5" cy="5.5" r="4.6" fill="#fff"/><path d="M2 9A4.9 4.9 0 0 1 9 2" stroke="#7a7a7a" stroke-width="1.7" fill="none"/><path d="M9 2A4.9 4.9 0 0 1 2 9" stroke="#e2e2e2" stroke-width="1.3" fill="none"/></svg>
<svg style="left:681.3px;top:560.1px" width="11" height="11" viewBox="0 0 11 11"><circle cx="5.5" cy="5.5" r="4.6" fill="#fff"/><path d="M2 9A4.9 4.9 0 0 1 9 2" stroke="#7a7a7a" stroke-width="1.7" fill="none"/><path d="M9 2A4.9 4.9 0 0 1 2 9" stroke="#e2e2e2" stroke-width="1.3" fill="none"/></svg>
<div class="t " style="left:697.90px;top:559.63px;font-size:12.6px;transform:scaleX(0.8921);"><u>W</u>hite</div>
<svg style="left:432px;top:583.1px" width="11" height="11" viewBox="0 0 11 11"><circle cx="5.5" cy="5.5" r="4.6" fill="#fff"/><path d="M2 9A4.9 4.9 0 0 1 9 2" stroke="#7a7a7a" stroke-width="1.7" fill="none"/><path d="M9 2A4.9 4.9 0 0 1 2 9" stroke="#e2e2e2" stroke-width="1.3" fill="none"/><circle cx="5.6" cy="5.7" r="2" fill="#000"/></svg>
<div class="t " style="left:448.65px;top:583.23px;font-size:12.6px;transform:scaleX(0.8491);">RGB-<u>v</u>alues:</div>
<div class="t " style="left:516.42px;top:583.23px;font-size:12.6px;transform:scaleX(0.9810);">R:</div>
<div class="sk" style="left:531px;top:580px;width:32px;height:19px;"></div>
<div class="t " style="left:537.93px;top:583.23px;font-size:12.6px;transform:scaleX(0.8718);">191</div>
<div class="t " style="left:573.71px;top:583.23px;font-size:12.6px;transform:scaleX(0.9217);">G:</div>
<div class="sk" style="left:589px;top:580px;width:32px;height:19px;"></div>
<div class="t " style="left:594.81px;top:583.23px;font-size:12.6px;transform:scaleX(0.9215);">255</div>
<div class="t " style="left:631.68px;top:583.23px;font-size:12.6px;transform:scaleX(0.9231);">B:</div>
<div class="sk" style="left:646px;top:580px;width:32px;height:19px;"></div>
<div class="t " style="left:651.59px;top:583.23px;font-size:12.6px;transform:scaleX(0.9091);">127</div>
<div class="btn" style="left:684.3px;top:580.5px;width:16.7px;height:20px;"></div>
<div class="t " style="left:687.18px;top:583.93px;font-size:12.6px;transform:scaleX(0.9750);">...</div>
<div class="btn" style="left:510.5px;top:649px;width:75.5px;height:23px;"></div>
<div class="t " style="left:540.04px;top:653.43px;font-size:12.6px;transform:scaleX(0.9257);">OK</div>
<div class="btn" style="left:592px;top:649px;width:75px;height:23px;"></div>
<div class="t " style="left:611.85px;top:653.43px;font-size:12.6px;transform:scaleX(0.8720);">Cancel</div>
<div class="btn" style="left:673px;top:649px;width:75px;height:23px;"></div>
<div class="t " style="left:696.70px;top:653.43px;font-size:12.6px;transform:scaleX(0.8224);"><u>A</u>pply</div>
<div class="a" style="left:481px;top:317px;width:430px;height:216px;box-sizing:border-box;background:#f0f0f0;border:1px solid #1883d7;box-shadow:0 3px 8px rgba(0,0,0,.35);"></div>
<div class="a" style="left:482px;top:318px;width:420px;height:24px;background:#fff;"></div>
<div class="t " style="left:484.62px;top:324.24px;font-size:12px;transform:scaleX(0.9683);">Select Color</div>
<svg style="left:889px;top:323px" width="12" height="12" viewBox="0 0 12 12"><path d="M0.5 0.5L11.5 11.5M11.5 0.5L0.5 11.5" stroke="#111" stroke-width="1.1"/></svg>
<div class="t " style="left:507.57px;top:358.83px;font-size:12.6px;transform:scaleX(0.8306);">Basic Colors:</div>
<div class="sw" style="left:508px;top:377px;background:#ff8080"></div>
<div class="sw" style="left:532px;top:377px;background:#ffaf80"></div>
<div class="sw" style="left:556px;top:377px;background:#ffdf80"></div>
<div class="sw" style="left:580px;top:377px;background:#efff80"></div>
<div class="sw" style="left:604px;top:377px;background:#bfff80"></div>
<div class="sw" style="left:628px;top:377px;background:#8fff80"></div>
<div class="sw" style="left:652px;top:377px;background:#80ff9f"></div>
<div class="sw" style="left:676px;top:377px;background:#80ffcf"></div>
<div class="sw" style="left:700px;top:377px;background:#80ffff"></div>
<div class="sw" style="left:724px;top:377px;background:#80cfff"></div>
<div class="sw" style="left:748px;top:377px;background:#809fff"></div>
<div class="sw" style="left:772px;top:377px;background:#8f80ff"></div>
<div class="sw" style="left:796px;top:377px;background:#bf80ff"></div>
<div class="sw" style="left:820px;top:377px;background:#ef80ff"></div>
<div class="sw" style="left:844px;top:377px;background:#ff80df"></div>
<div class="sw" style="left:868px;top:377px;background:#ff80af"></div>
<div class="sw" style="left:508px;top:405px;background:#c86464"></div>
<div class="sw" style="left:532px;top:405px;background:#c88a64"></div>
<div class="sw" style="left:556px;top:405px;background:#c8af64"></div>
<div class="sw" style="left:580px;top:405px;background:#bcc864"></div>
<div class="sw" style="left:604px;top:405px;background:#96c864"></div>
<div class="sw" style="left:628px;top:405px;background:#71c864"></div>
<div class="sw" style="left:652px;top:405px;background:#64c87d"></div>
<div class="sw" style="left:676px;top:405px;background:#64c8a3"></div>
<div class="sw" style="left:700px;top:405px;background:#64c8c8"></div>
<div class="sw" style="left:724px;top:405px;background:#64a3c8"></div>
<div class="sw" style="left:748px;top:405px;background:#647dc8"></div>
<div class="sw" style="left:772px;top:405px;background:#7164c8"></div>
<div class="sw" style="left:796px;top:405px;background:#9664c8"></div>
<div class="sw" style="left:820px;top:405px;background:#bc64c8"></div>
<div class="sw" style="left:844px;top:405px;background:#c864af"></div>
<div class="sw" style="left:868px;top:405px;background:#c8648a"></div>
<div class="sw" style="left:508px;top:432px;background:#964b4b"></div>
<div class="sw" style="left:532px;top:432px;background:#96674b"></div>
<div class="sw" style="left:556px;top:432px;background:#96844b"></div>
<div class="sw" style="left:580px;top:432px;background:#8d964b"></div>
<div class="sw" style="left:604px;top:432px;background:#71964b"></div>
<div class="sw" style="left:628px;top:432px;background:#55964b"></div>
<div class="sw" style="left:652px;top:432px;background:#4b965e"></div>
<div class="sw" style="left:676px;top:432px;background:#4b967a"></div>
<div class="sw" style="left:700px;top:432px;background:#4b9696"></div>
<div class="sw" style="left:724px;top:432px;background:#4b7a96"></div>
<div class="sw" style="left:748px;top:432px;background:#4b5e96"></div>
<div class="sw" style="left:772px;top:432px;background:#554b96"></div>
<div class="sw" style="left:796px;top:432px;background:#714b96"></div>
<div class="sw" style="left:820px;top:432px;background:#8d4b96"></div>
<div class="sw" style="left:844px;top:432px;background:#964b84"></div>
<div class="sw" style="left:868px;top:432px;background:#964b67"></div>
<div class="sw" style="left:508px;top:460px;background:#653232"></div>
<div class="sw" style="left:532px;top:460px;background:#654532"></div>
<div class="sw" style="left:556px;top:460px;background:#655832"></div>
<div class="sw" style="left:580px;top:460px;background:#5e6532"></div>
<div class="sw" style="left:604px;top:460px;background:#4c6532"></div>
<div class="sw" style="left:628px;top:460px;background:#396532"></div>
<div class="sw" style="left:652px;top:460px;background:#32653f"></div>
<div class="sw" style="left:676px;top:460px;background:#326552"></div>
<div class="sw" style="left:700px;top:460px;background:#326565"></div>
<div class="sw" style="left:724px;top:460px;background:#325265"></div>
<div class="sw" style="left:748px;top:460px;background:#323f65"></div>
<div class="sw" style="left:772px;top:460px;background:#393265"></div>
<div class="sw" style="left:796px;top:460px;background:#4c3265"></div>
<div class="sw" style="left:820px;top:460px;background:#5e3265"></div>
<div class="sw" style="left:844px;top:460px;background:#653258"></div>
<div class="sw" style="left:868px;top:460px;background:#653245"></div>
<div class="sw" style="left:508px;top:491px;background:#000"></div>
<div class="sw" style="left:535px;top:491px;width:23px;background:#fff"></div>
<div class="btn" style="left:563px;top:491px;width:93px;height:23px;"></div>
<div class="t " style="left:576.64px;top:496.13px;font-size:12.6px;transform:scaleX(0.8746);">Select color...</div>
<div class="t " style="left:662.66px;top:494.93px;font-size:12.6px;transform:scaleX(0.8599);">Color picked</div>
<div class="sw" style="left:727.5px;top:491px;width:39px;background:#bfff7f"></div>
<div class="btn" style="left:770px;top:491px;width:60px;height:23px;border-color:#696969 #000 #000 #696969;box-shadow:inset -1px -1px 0 #696969, inset 1px 1px 0 #fff, inset -2px -2px 0 #a0a0a0;"></div>
<div class="t " style="left:792.09px;top:495.73px;font-size:12.6px;transform:scaleX(0.8286);">OK</div>
<div class="btn" style="left:833px;top:491px;width:60px;height:23px;"></div>
<div class="t " style="left:845.73px;top:495.73px;font-size:12.6px;transform:scaleX(0.8880);">Cancel</div>
<div class="or" style="left:548.2px;top:124.3px;width:31.8px;height:32.4px;border-radius:8px;"></div>
<div class="or" style="left:224px;top:317px;width:155.0px;height:30.6px;border-radius:9px;"></div>
<div class="or" style="left:446.2px;top:211.3px;width:49.1px;height:37.9px;border-radius:8px;"></div>
<div class="or" style="left:678.4px;top:573.7px;width:35.2px;height:32.3px;border-radius:8px;"></div>
<div class="or" style="left:504px;top:644.1px;width:88.1px;height:35.1px;border-radius:8px;"></div>
<div class="or" style="left:667.2px;top:638.6px;width:87.0px;height:44.0px;border-radius:8px;"></div>
<svg style="left:0;top:0" width="900" height="700" viewBox="0 0 900 700"><path d="M353 333H405" stroke="#fab61d" stroke-width="2.7"/><path d="M404 323.5V341.5L418.5 332.5Z" fill="#fab61d"/><path d="M710.2 575V529" stroke="#fab61d" stroke-width="2.7"/><path d="M700.2 530.2H719.3L709.8 515.3Z" fill="#fab61d"/></svg>
<div class="bg" style="left:567px;top:104px;">1</div>
<div class="bg" style="left:327px;top:296px;">3</div>
<div class="bg" style="left:471.2px;top:189px;">4</div>
<div class="bg" style="left:662.8px;top:559px;">5</div>
<div class="bg" style="left:662.8px;top:620.9px;">6</div>
<div class="bg" style="left:541.1px;top:625px;">7</div>
</body></html>
